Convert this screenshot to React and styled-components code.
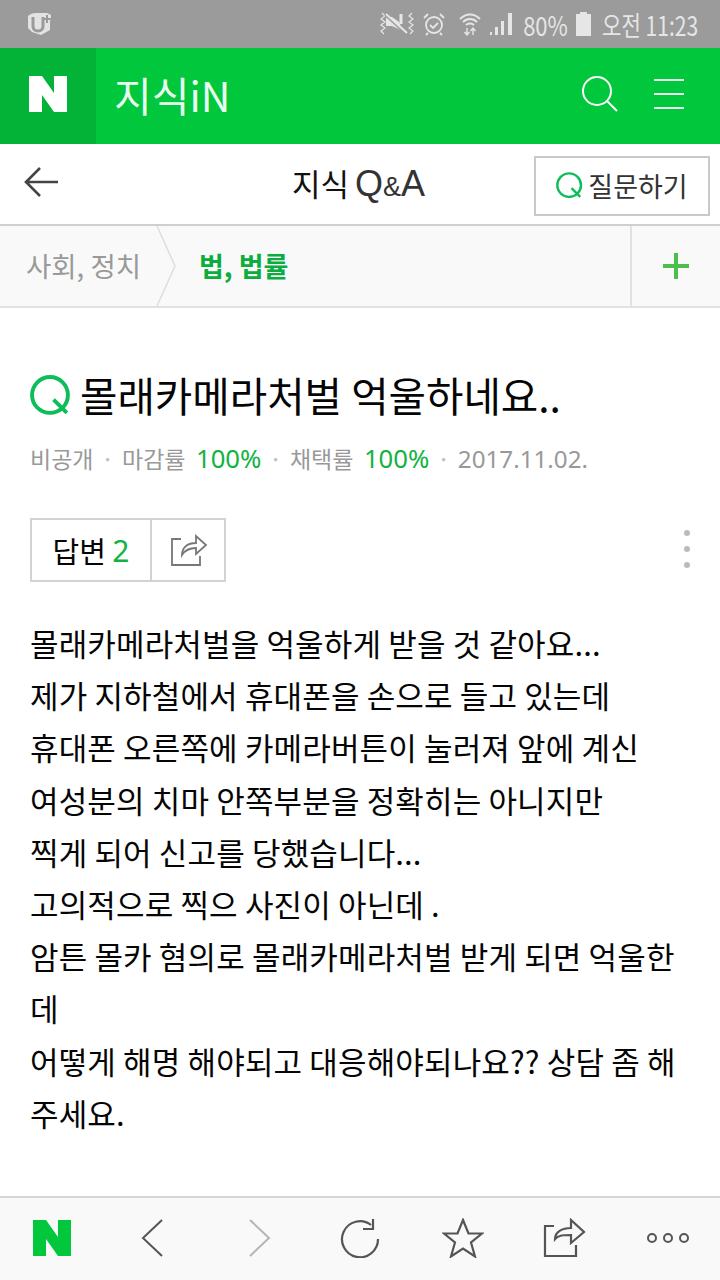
import React from 'react';
import styled, { createGlobalStyle } from 'styled-components';

const Global = createGlobalStyle`
  html, body { margin: 0; padding: 0; background: #fff; }
  body { font-family: "Noto Sans CJK KR", "Noto Sans", sans-serif; }
  * { box-sizing: border-box; }
`;

const GREEN = '#00c73c';

const NLogo = ({ color }) => (
  <svg width="38" height="36" viewBox="0 0 38 36">
    <path d="M0 0h13l12 17V0h13v36H25L13 19v17H0z" fill={color} />
  </svg>
);

const QMark = ({ size, width = 3 }) => (
  <svg width={size} height={size} viewBox="0 0 40 40" fill="none" stroke="#0dbd5a" strokeWidth={width}>
    <circle cx="19.5" cy="19.5" r="17.5" />
    <path d="M23 24l13 13" />
  </svg>
);

function StatusBar() {
  return (
    <Status>
      <svg width="30" height="26" viewBox="0 0 30 26" fill="none">
        <path d="M5 5c2-2 5-3 8-3h11l4 2v5l-1 1v9l-9 5-9-3-4-4V7z" fill="#e3e3e3" />
        <path d="M10 6v9c0 3 2 5 5 5s5-2 5-5V6" stroke="#9b9b9b" strokeWidth="3" />
        <path d="M24 4v8M20 8h8" stroke="#9b9b9b" strokeWidth="2" />
      </svg>
      <StatusRight>
        <svg width="36" height="24" viewBox="0 0 36 24" fill="none" stroke="#e6e6e6">
          <path d="M3 1l3 3-4 3 4 3-4 3 4 3-4 3 3 3M33 1l-3 3 4 3-4 3 4 3-4 3 4 3-3 3" strokeWidth="1.200" />
          <path d="M7 5h6l7 5 4 9-11-5H7z" fill="#e6e6e6" stroke="none" />
          <path d="M22 2v10" strokeWidth="3" />
          <path d="M6 3l21 19" stroke="#9b9b9b" strokeWidth="2" />
          <path d="M7 2l21 19" strokeWidth="2" />
        </svg>
        <svg width="22" height="24" viewBox="0 0 22 24" fill="none" stroke="#e6e6e6" strokeWidth="1.800">
          <circle cx="11" cy="13" r="8" />
          <path d="M7 13l3 3 5-5M1 6l4-4M21 6l-4-4M5 21l-2 2M17 21l2 2" />
        </svg>
        <WifiIcon width="22" height="26" viewBox="0 0 22 26" fill="none" stroke="#e6e6e6" strokeWidth="1.800">
          <path d="M1 8c6-6 14-6 20 0M4 11c4-4 10-4 14 0M7 14c2-2 6-2 8 0" />
          <path d="M8 17v7M5.500 21l2.500 3 2.500-3M14 24v-7M11.500 20l2.500-3 2.500 3" strokeWidth="1.400" />
        </WifiIcon>
        <svg width="24" height="24" viewBox="0 0 24 24" fill="#e6e6e6">
          <path d="M1 20h2v3H1zM6 15h3v8H6zM12 9h3v14h-3zM19 1h4v22h-4z" />
        </svg>
        <StatusPercent>80%</StatusPercent>
        <svg width="15" height="24" viewBox="0 0 15 24" fill="#e6e6e6">
          <path d="M4 0h7v2h4v22H0V2h4z" />
        </svg>
        <StatusTime>오전 11:23</StatusTime>
      </StatusRight>
    </Status>
  );
}

function Header() {
  return (
    <GreenBar>
      <LogoCell><NLogo color="#fff" /></LogoCell>
      <Brand>지식iN</Brand>
      <HeaderIcons>
        <svg width="36" height="36" viewBox="0 0 36 36" fill="none" stroke="#fff" strokeWidth="2">
          <circle cx="15" cy="15" r="14" />
          <path d="M25 25l10 10" />
        </svg>
        <svg width="30" height="30" viewBox="0 0 30 30" fill="none" stroke="#e9fbef" strokeWidth="2">
          <path d="M0 1h30M0 15h30M0 29h30" />
        </svg>
      </HeaderIcons>
    </GreenBar>
  );
}

function App() {
  return (
    <Page>
      <Global />
      <StatusBar />
      <Header />
      <SubBar>
        <BackArrow width="34" height="32" viewBox="0 0 34 32" fill="none" stroke="#444" strokeWidth="2.600">
          <path d="M34 16H2M16 2L2 16l14 14" />
        </BackArrow>
        <SubTitle>지식 <Latin>Q<small>&amp;</small>A</Latin></SubTitle>
        <AskButton><QMark size={27} width={3.600} />질문하기</AskButton>
      </SubBar>
      <Crumbs>
        <CrumbPrev>사회, 정치</CrumbPrev>
        <CrumbArrow width="20" height="80" viewBox="0 0 20 80" fill="none" stroke="#dcdcdc" strokeWidth="1.400">
          <path d="M1 0l18 40L1 80" />
        </CrumbArrow>
        <CrumbNow>법, 법률</CrumbNow>
        <CrumbPlus>
          <svg width="26" height="26" viewBox="0 0 26 26" stroke="#4bbf4b" strokeWidth="4">
            <path d="M0 13h26M13 0v26" />
          </svg>
        </CrumbPlus>
      </Crumbs>
      <Question>
        <TitleRow>
          <QMark size={41} width={3.800} />
          <Title>몰래카메라처벌 억울하네요..</Title>
        </TitleRow>
        <Meta>
          <span>비공개</span><Dot>·</Dot>
          <span>마감률</span><Rate>100%</Rate><Dot>·</Dot>
          <span>채택률</span><Rate>100%</Rate><Dot>·</Dot>
          <MetaDate>2017.11.02.</MetaDate>
        </Meta>
        <ActionRow>
          <ButtonGroup>
            <AnswerCell>답변 <b>2</b></AnswerCell>
            <ShareCell>
              <svg width="38" height="32" viewBox="0 0 38 32" fill="none" stroke="#777" strokeWidth="1.800">
                <path d="M11 5H2v26h28v-9" />
                <path d="M12 21c0-8 6-12 14-12V2l10 9-10 9v-6c-6 0-11 2-14 7z" />
              </svg>
            </ShareCell>
          </ButtonGroup>
          <Kebab><i /><i /><i /></Kebab>
        </ActionRow>
        <Body>
          몰래카메라처벌을 억울하게 받을 것 같아요...{'\n'}
          제가 지하철에서 휴대폰을 손으로 들고 있는데{'\n'}
          휴대폰 오른쪽에 카메라버튼이 눌러져 앞에 계신{'\n'}
          여성분의 치마 안쪽부분을 정확히는 아니지만{'\n'}
          찍게 되어 신고를 당했습니다...{'\n'}
          고의적으로 찍으 사진이 아닌데 .{'\n'}
          암튼 몰카 혐의로 몰래카메라처벌 받게 되면 억울한{'\n'}
          데{'\n'}
          어떻게 해명 해야되고 대응해야되나요?? 상담 좀 해{'\n'}
          주세요.
        </Body>
      </Question>
      <BottomBar>
        <NLogo color={GREEN} />
        <NavBack width="22" height="38" viewBox="0 0 22 38" fill="none" stroke="#555" strokeWidth="2">
          <path d="M21 1L2 19l19 18" />
        </NavBack>
        <NavForward width="22" height="38" viewBox="0 0 22 38" fill="none" stroke="#b5b5b5" strokeWidth="2">
          <path d="M1 1l19 18L1 37" />
        </NavForward>
        <svg width="40" height="40" viewBox="0 0 40 40" fill="none" stroke="#555" strokeWidth="2.200">
          <path d="M31 7A18 18 0 1 0 38 21" />
          <path d="M33 1v10H23" />
        </svg>
        <svg width="42" height="40" viewBox="0 0 42 40" fill="none" stroke="#555" strokeWidth="2.200">
          <path d="M21 2l5.500 13.500H40l-11 9 4 14-12-8-12 8 4-14-11-9h13.500z" />
        </svg>
        <svg width="44" height="40" viewBox="0 0 44 40" fill="none" stroke="#555" strokeWidth="2.200">
          <path d="M11 8H2v30h31V27" />
          <path d="M12 21c0-7 7-11 16-11V2l13 12-13 11v-8c-7 0-13 0-16 4z" />
        </svg>
        <Dots><i /><i /><i /></Dots>
      </BottomBar>
    </Page>
  );
}

export default App;

const Page = styled.div`
  width: 720px;
  height: 1280px;
  display: flex;
  flex-direction: column;
  overflow: hidden;
  background: #fff;
`;

const Status = styled.div`
  height: 48px;
  flex: none;
  background: #9b9b9b;
  display: flex;
  align-items: center;
  justify-content: space-between;
  padding: 0 22px 0 23px;
`;

const StatusRight = styled.div`
  display: flex;
  align-items: center;
  gap: 8px;
`;

const WifiIcon = styled.svg`
  margin-left: 6px;
`;

/* the phone's condensed clock face is not installed: squeeze Noto instead */
const StatusPercent = styled.span`
  display: inline-block;
  margin-left: -8px;
  color: #e6e6e6;
  font-size: 27px;
  line-height: 1;
  white-space: nowrap;
  transform: scaleX(0.815);
  transform-origin: right center;
`;

const StatusTime = styled(StatusPercent)`
  margin-left: -24px;
  transform: scaleX(0.78);
`;

const GreenBar = styled.div`
  height: 96px;
  flex: none;
  background: ${GREEN};
  display: flex;
  align-items: center;
`;

const LogoCell = styled.div`
  width: 96px;
  height: 96px;
  padding-bottom: 4px;
  background: #03b337;
  display: flex;
  align-items: center;
  justify-content: center;
`;

const Brand = styled.div`
  margin-left: 18px;
  margin-bottom: 4px;
  color: #e9fbef;
  font-size: 41px;
  line-height: 1;
`;

const HeaderIcons = styled.div`
  margin-left: auto;
  padding-right: 36px;
  padding-bottom: 4px;
  display: flex;
  align-items: center;
  gap: 36px;
`;

const SubBar = styled.div`
  height: 82px;
  flex: none;
  position: relative;
  display: flex;
  align-items: center;
  justify-content: space-between;
  padding: 0 10px 0 24px;
  border-bottom: 2px solid #cfcfcf;
`;

const BackArrow = styled.svg`
  margin-bottom: 4px;
`;

const SubTitle = styled.div`
  position: absolute;
  left: 292px;
  top: 17px;
  font-size: 31px;
  line-height: 44px;
  color: #111;
`;

const Latin = styled.span`
  margin-left: -1px;
  font-family: "Liberation Sans", sans-serif;
  font-size: 36px;
  color: #333;
  small { font-size: 27px; }
`;

const AskButton = styled.div`
  width: 176px;
  height: 60px;
  margin-top: 4px;
  padding-bottom: 2px;
  border: 2px solid #c9c9c9;
  display: flex;
  align-items: center;
  justify-content: center;
  gap: 5px;
  font-size: 27px;
  color: #333;
`;

const Crumbs = styled.div`
  height: 82px;
  flex: none;
  display: flex;
  align-items: center;
  background: #f9f9f9;
  border-bottom: 2px solid #e2e2e2;
`;

const CrumbPrev = styled.div`
  margin-left: 26px;
  margin-bottom: 2px;
  width: 130px;
  font-size: 27.500px;
  color: #999;
  white-space: nowrap;
`;

const CrumbArrow = styled.svg`
  flex: none;
`;

const CrumbNow = styled.div`
  margin-left: 23px;
  margin-bottom: 2px;
  font-size: 27px;
  font-weight: 700;
  color: #0cad40;
`;

const CrumbPlus = styled.div`
  margin-left: auto;
  width: 90px;
  height: 80px;
  border-left: 2px solid #e2e2e2;
  display: flex;
  align-items: center;
  justify-content: center;
`;

const Question = styled.main`
  flex: 1;
  padding: 63px 30px 0;
  min-height: 0;
`;

const TitleRow = styled.div`
  display: flex;
  align-items: center;
  gap: 9px;
  height: 48px;
`;

const Title = styled.h1`
  margin: 0;
  font-size: 40.700px;
  font-weight: 400;
  line-height: 48px;
  color: #050505;
  white-space: nowrap;
`;

const Meta = styled.div`
  margin-top: 22px;
  display: flex;
  align-items: center;
  height: 34px;
  font-size: 23px;
  color: #999;
  white-space: nowrap;
`;

const Dot = styled.span`
  width: 28.500px;
  text-align: center;
  color: #bbb;
`;

const Rate = styled.span`
  margin-left: 10.500px;
  font-family: "Noto Sans", sans-serif;
  font-size: 25.700px;
  color: #12b33f;
`;

const MetaDate = styled.span`
  font-family: "Noto Sans", sans-serif;
  font-size: 24.200px;
`;

const ActionRow = styled.div`
  margin-top: 43px;
  display: flex;
  align-items: center;
  justify-content: space-between;
`;

const ButtonGroup = styled.div`
  display: flex;
  height: 64px;
  border: 2px solid #d2d2d2;
`;

const AnswerCell = styled.div`
  width: 118px;
  display: flex;
  align-items: center;
  justify-content: center;
  font-size: 29px;
  color: #050505;
  white-space: pre;
  b { font-weight: 400; font-size: 30px; color: #12b33f; font-family: "Noto Sans", sans-serif; }
`;

const ShareCell = styled.div`
  width: 74px;
  padding-left: 2px;
  border-left: 2px solid #d2d2d2;
  display: flex;
  align-items: center;
  justify-content: center;
`;

const Kebab = styled.div`
  display: flex;
  flex-direction: column;
  gap: 10px;
  margin-bottom: 2px;
  i { width: 6px; height: 6px; border-radius: 50%; background: #bbb; display: block; }
`;

const Body = styled.div`
  margin-top: 35px;
  font-size: 31px;
  letter-spacing: 0.15px;
  line-height: 52.2px;
  color: #050505;
  white-space: pre-line;
`;

const BottomBar = styled.nav`
  height: 84px;
  flex: none;
  background: #f9f9f9;
  border-top: 2px solid #d6d6d6;
  display: grid;
  grid-template-columns: repeat(7, 102.6px);
  justify-items: center;
  align-items: center;
  padding: 0 0 2px 1px;
`;

const NavBack = styled.svg`
  margin-right: 5px;
`;

const NavForward = styled.svg`
  margin-left: 5px;
`;

const Dots = styled.div`
  display: flex;
  gap: 6px;
  i { width: 10px; height: 10px; border: 2px solid #555; border-radius: 50%; display: block; }
`;
